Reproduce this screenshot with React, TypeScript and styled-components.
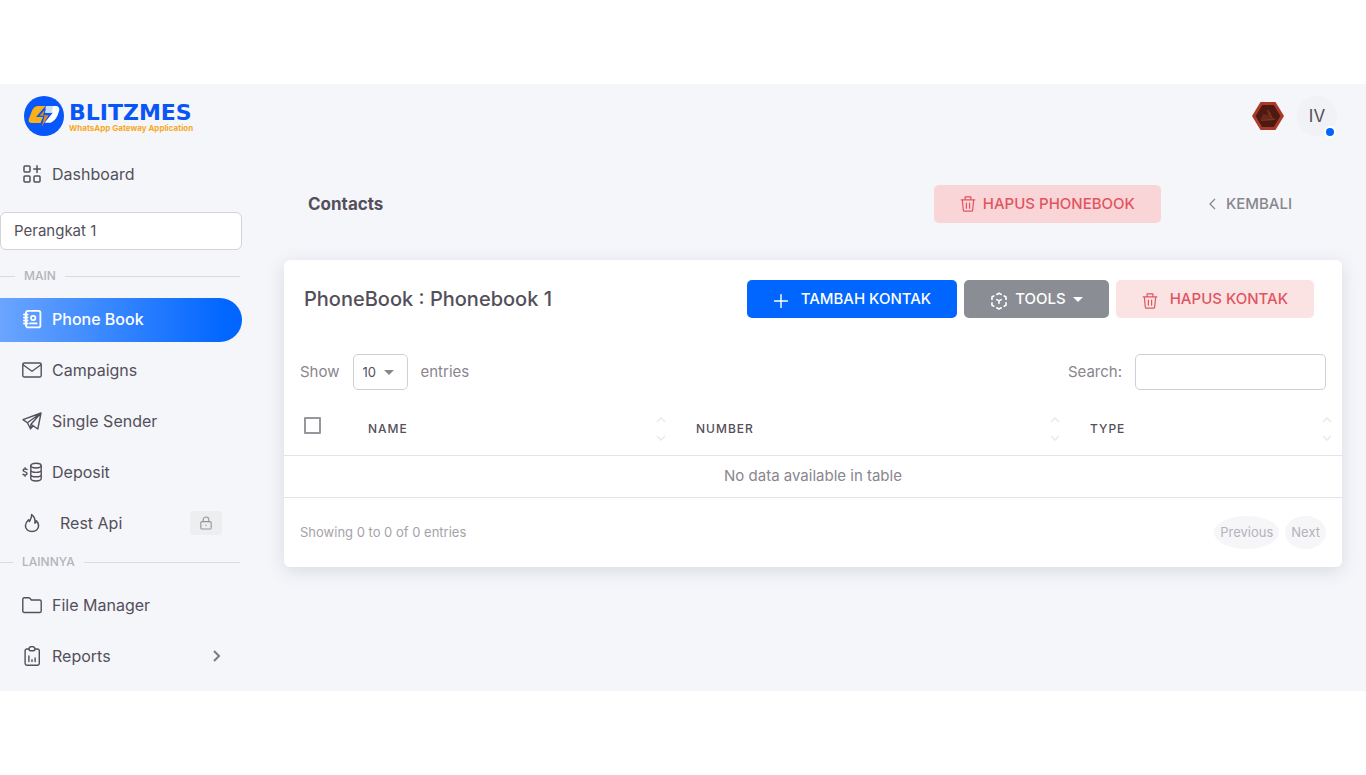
import React from "react";
import styled, { createGlobalStyle, css } from "styled-components";

const color = {
  page: "#f4f6fa",
  text: "#544f5a",
  muted: "#89868d",
  faint: "#b4b2b9",
  line: "#e4e4e8",
  blue: "#0066ff",
  red: "#e05560",
};

const GlobalStyle = createGlobalStyle`
  *, *::before, *::after { box-sizing: border-box; }
  body {
    margin: 0;
    background: #fff;
    color: ${color.text};
    font-family: Inter, "Liberation Sans", sans-serif;
    font-size: 15px;
    line-height: 22px;
  }
  button, input, select { font: inherit; color: inherit; }
`;

const Shell = styled.div`
  display: flex;
  margin: 84px 0;
  background: ${color.page};
`;

const Sidebar = styled.aside`
  flex: 0 0 260px;
  padding: 0 18px 12px 0;
`;

const Brand = styled.a`
  display: flex;
  align-items: center;
  gap: 5px;
  height: 64px;
  padding-left: 24px;
  text-decoration: none;
`;

const BrandText = styled.span`
  display: flex;
  flex-direction: column;
  padding-top: 4px;
  white-space: nowrap;
`;

const BrandName = styled.span`
  color: #0a55f5;
  font: 700 22px/20px "DejaVu Sans", sans-serif;
`;

const Tagline = styled.span`
  color: #f9a825;
  font-size: 8px;
  font-weight: 700;
  line-height: 10px;
`;

const NavList = styled.ul`
  display: flex;
  flex-direction: column;
  gap: 7px;
  margin: 0;
  padding: 0;
  list-style: none;
`;

const NavLink = styled.a<{ $active?: boolean; $wide?: boolean }>`
  display: flex;
  align-items: center;
  gap: ${(p) => (p.$wide ? 18 : 10)}px;
  height: 44px;
  padding: 0 20px 2px 22px;
  border-radius: 0 22px 22px 0;
  color: ${color.text};
  font-size: 16px;
  line-height: 24px;
  text-decoration: none;
  svg { flex: none; }
  ${(p) =>
    p.$active &&
    css`
      background: linear-gradient(90deg, #6aa5ff 0%, #1c76ff 70%, ${color.blue} 94%);
      color: #fff;
      font-weight: 500;
    `}
`;

const NavEnd = styled.span`
  display: flex;
  margin-left: auto;
  color: #7d7a82;
`;

const LockBadge = styled(NavEnd)`
  align-items: center;
  justify-content: center;
  width: 32px;
  height: 24px;
  border-radius: 4px;
  background: #edeef0;
  color: #97959b;
`;

const DeviceSelect = styled.select`
  display: block;
  width: 100%;
  height: 38px;
  margin: 15px 0;
  padding: 0 13px;
  border: 1px solid #d4d3d7;
  border-radius: 6px;
  background: #fff;
  appearance: none;
`;

const SectionTitle = styled.h2<{ $lead: number }>`
  display: flex;
  align-items: center;
  gap: 9px;
  height: 22px;
  margin: 0 2px 11px 0;
  color: ${color.faint};
  font-size: 12px;
  font-weight: 500;
  &::before, &::after { content: ""; height: 1px; background: #dadbe0; }
  &::before { width: ${(p) => p.$lead}px; }
  &::after { flex: 1; }
`;

const OtherTitle = styled(SectionTitle)`
  margin-top: 5px;
`;

const TopNav = styled.div`
  padding-top: 5px;
`;

const Main = styled.main`
  flex: 1;
  min-width: 0;
  padding: 0 24px;
`;

const TopBar = styled.header`
  display: flex;
  align-items: center;
  justify-content: flex-end;
  gap: 13px;
  height: 64px;
  padding-right: 5px;
`;

const Avatar = styled.button`
  position: relative;
  width: 40px;
  height: 40px;
  padding: 0;
  border: 0;
  border-radius: 50%;
  background: #f1f2f5;
  font-size: 17px;
  &::after {
    content: "";
    position: absolute;
    right: 1px;
    bottom: -2px;
    width: 12px;
    height: 12px;
    border: 2px solid #fff;
    border-radius: 50%;
    background: ${color.blue};
  }
`;

const PageHead = styled.div`
  display: flex;
  align-items: center;
  gap: 20px;
  padding: 37px 24px;
`;

const PageTitle = styled.h1`
  margin: 0 auto 0 0;
  font-size: 17px;
  font-weight: 700;
`;

const tones = {
  primary: css`background: ${color.blue}; color: #fff;`,
  secondary: css`background: #8a8d93; color: #fff;`,
  danger: css`background: #fad5d8; color: ${color.red};`,
  dangerSoft: css`background: #fbe3e4; color: ${color.red};`,
  plain: css`background: transparent; color: ${color.muted};`,
};

const Button = styled.button<{ $tone: keyof typeof tones; $gap?: number }>`
  display: inline-flex;
  align-items: center;
  gap: ${(p) => p.$gap ?? 12}px;
  height: 38px;
  padding: 0 26px;
  border: 0;
  border-radius: 5px;
  font-weight: 500;
  text-transform: uppercase;
  white-space: nowrap;
  ${(p) => tones[p.$tone]}
`;

const Card = styled.section`
  border-radius: 6px;
  background: #fff;
  box-shadow: 0 4px 18px rgba(76, 78, 100, 0.16);
`;

const CardHead = styled.div`
  display: flex;
  align-items: center;
  gap: 7px;
  padding: 20px 28px 20px 20px;
  ${Button} svg:first-child { margin-top: 3px; }
`;

const CardTitle = styled.h2`
  margin: 0 auto 0 0;
  font-size: 20px;
  font-weight: 500;
`;

const Controls = styled.div`
  display: flex;
  align-items: center;
  justify-content: space-between;
  padding: 16px 16px 14px;
  color: ${color.muted};
`;

const Field = styled.label`
  display: flex;
  align-items: center;
  gap: 13px;
`;

const SelectWrap = styled.span`
  position: relative;
  display: flex;
  svg { position: absolute; right: 14px; top: 16px; pointer-events: none; }
`;

const LengthSelect = styled.select`
  width: 55px;
  height: 36px;
  padding: 0 9px;
  border: 1px solid #d0cfd3;
  border-radius: 5px;
  background: #fff;
  color: ${color.text};
  font-size: 13px;
  appearance: none;
`;

const SearchInput = styled.input`
  width: 191px;
  height: 36px;
  padding: 0 12px;
  border: 1px solid #d0cfd3;
  border-radius: 5px;
  background: #fff;
`;

const Table = styled.table`
  width: 100%;
  border-collapse: collapse;
  table-layout: fixed;
`;

const Th = styled.th<{ $width?: string }>`
  width: ${(p) => p.$width ?? "auto"};
  height: 51px;
  padding: 0 10px 0 20px;
  border-bottom: 1px solid ${color.line};
  font-size: 12px;
  font-weight: 500;
  letter-spacing: 1px;
  text-align: left;
`;

const SortHead = styled.span`
  display: flex;
  align-items: center;
  justify-content: space-between;
`;

const Check = styled.input`
  display: block;
  width: 17px;
  height: 17px;
  margin: 0 0 8px;
  border: 2px solid #98959c;
  border-radius: 1px;
  background: #fff;
  appearance: none;
  &:checked { background: ${color.blue}; }
`;

const Empty = styled.td`
  height: 42px;
  padding: 0;
  border-bottom: 1px solid ${color.line};
  color: ${color.muted};
  text-align: center;
`;

const CardFoot = styled.div`
  display: flex;
  align-items: center;
  gap: 6px;
  padding: 18px 16px;
  color: #a5a3a9;
  font-size: 13px;
`;

const Info = styled.span`
  margin-right: auto;
`;

const PageButton = styled.button`
  height: 33px;
  padding: 0 6px;
  border: 0;
  border-radius: 50%;
  background: #f6f6f9;
  color: ${color.faint};
`;

const Stroke = ({ size = 20, width = 1.5, children }: { size?: number; width?: number; children: React.ReactNode }) => (
  <svg width={size} height={size} viewBox="0 0 20 20" fill="none" stroke="currentColor" strokeWidth={width} strokeLinecap="round" strokeLinejoin="round" aria-hidden="true">
    {children}
  </svg>
);

const DashboardIcon = () => (
  <Stroke>
    <rect x="2" y="2" width="6" height="6" rx="1" />
    <rect x="2" y="12" width="6" height="6" rx="1" />
    <rect x="12" y="12" width="6" height="6" rx="1" />
    <path d="M15 1.8v6.6M11.7 5.1h6.6" />
  </Stroke>
);
const BookIcon = () => (
  <Stroke width={1.8}>
    <rect x="4" y="1.8" width="14.4" height="16.6" rx="2" />
    <path d="M2 5.5h3.6M2 8.5h3.6M2 11.5h3.6M2 14.5h3.6M8 14.4h6.6" />
    <circle cx="11.2" cy="9" r="2.2" />
  </Stroke>
);
const MailIcon = () => (
  <Stroke width={1.4}>
    <rect x=".8" y="3" width="18.4" height="14" rx="1.6" />
    <path d="m1 4.8 9 6.4 9-6.4" />
  </Stroke>
);
const SendIcon = () => (
  <Stroke width={1.4}>
    <path d="M19 2 1 8.6l4.400 3.200L19 2l-3.200 16-4.600-3.200-2.700 3-3.100-6M19 2 9 13.200l2.200 1.600M9 13.200l-.5 4.600" />
  </Stroke>
);
const DepositIcon = () => (
  <Stroke width={1.4}>
    <ellipse cx="14" cy="3.6" rx="5.2" ry="2.4" />
    <path d="M8.8 3.6v13c0 1.4 2.3 2.4 5.2 2.4s5.2-1 5.2-2.4v-13M8.8 8c0 1.4 2.3 2.4 5.2 2.4s5.2-1 5.2-2.4M8.8 12.4c0 1.4 2.3 2.4 5.2 2.4s5.2-1 5.2-2.4" />
    <path d="M5 7.5C4.4 6.9 1.1 6.5 1.1 8.3c0 1.9 4 1.2 4 3.2 0 1.8-3.4 1.7-4.1.8M3.1 5.8v1M3.1 13.3v1" />
  </Stroke>
);
const FireIcon = () => (
  <Stroke width={1.5}>
    <path d="M9.6 1.6c.4 3.400-1.400 4.800-2.200 6.800-.5-.5-.7-1-.8-1.600-2 1.800-3.200 3.800-3.200 6 0 3.400 3 5.800 6.600 5.800s6.600-2.400 6.600-5.800c0-2-1-3.800-2.200-5-.2 1.200-.7 1.900-1.500 2.300.4-3.400-.7-6.800-3.300-8.500Z" />
  </Stroke>
);
const LockIcon = () => (
  <Stroke size={14} width={1.6}>
    <rect x="2.6" y="8" width="14.8" height="10.6" rx="1.6" />
    <path d="M6 8V5.4a4 4 0 0 1 8 0V8M10 13v.6" />
  </Stroke>
);
const FolderIcon = () => (
  <Stroke width={1.4}>
    <path d="M.8 15.9V4.300c0-1 .7-1.600 1.600-1.600h4.200c.6 0 1 .2 1.300.6l1.400 1.700h8.300c1 0 1.600.7 1.600 1.600v9.300c0 1-.7 1.600-1.600 1.600H2.400c-.9 0-1.600-.6-1.600-1.600Z" />
  </Stroke>
);
const ReportIcon = () => (
  <Stroke width={1.4}>
    <path d="M7 3H4.900c-1 0-1.800.7-1.800 1.700v12.900c0 1 .8 1.700 1.800 1.700h10.600c1 0 1.800-.7 1.800-1.700V4.700c0-1-.8-1.700-1.800-1.700H13" />
    <path d="M7 3c0-2 1.200-2.400 3-2.400S13 1 13 3c0 1.200-.6 1.800-1.600 1.800H8.600C7.600 4.800 7 4.200 7 3ZM6.900 10v5.500M10 13.700v1.800M13.100 12v3.500" />
  </Stroke>
);
const TrashIcon = () => (
  <Stroke size={16} width={1.5}>
    <path d="M1.500 4.800h17M6.400 4.500V1.200h7.200v3.300M2.900 5l1.300 13c.1.700.5 1 1.100 1h9.400c.6 0 1-.3 1.100-1l1.300-13M8 9v6.200M12 9v6.200" />
  </Stroke>
);
const PlusIcon = () => (
  <Stroke size={16} width={1.8}>
    <path d="M10 2v16M2 10h16" />
  </Stroke>
);
const CubeIcon = () => (
  <Stroke size={18} width={1.8}>
    <path d="M7.500 2.700 10 1.400l2.500 1.300M15.800 4.400l2 1.200v2.600M17.800 12v2.600l-2 1.200M12.500 17.500 10 18.800l-2.500-1.300M4.200 15.800l-2-1.200V12M2.200 8.200V5.600l2-1.200M7.600 8.500l2.400 1.400 2.400-1.400M10 9.900v2.700" />
  </Stroke>
);
const ChevronIcon = ({ left = false }: { left?: boolean }) => (
  <svg width="10" height="14" viewBox="0 0 10 14" fill="none" stroke="currentColor" strokeWidth={left ? 1.3 : 2} aria-hidden="true">
    <path d={left ? "M8 2 3 7l5 5" : "m2 2 5 5-5 5"} />
  </svg>
);
const CaretIcon = () => (
  <svg width="10" height="5" viewBox="0 0 10 5" fill="currentColor" aria-hidden="true">
    <path d="M0 0h10L5 5Z" />
  </svg>
);
const SortIcon = () => (
  <svg width="10" height="24" viewBox="0 0 10 24" fill="none" stroke="#e8e7ea" strokeWidth="1.300" aria-hidden="true">
    <path d="m1 5 4-4 4 4M1 19l4 4 4-4" />
  </svg>
);
const LogoMark = () => (
  <svg width="40" height="40" viewBox="0 0 40 40" aria-hidden="true">
    <circle cx="20" cy="20" r="20" fill="#0757fb" />
    <path d="M14.500 10h7L12 21h7l-2.500 6H8.500c-3.200 0-4.600-1.800-3.500-4.600l2.900-7.400C9.200 11.800 11.200 10 14.500 10Z" fill="#fbb018" />
    <path d="M22 10h9c3.600 0 5 2 4 5.300l-1.200 3.500c-1.300 3.600-3.600 6.200-7.200 7.900H20.500l8.300-10h-7.600Z" fill="#fff" />
    <path d="M22 10h7l-1 6.700h-6.800Z" fill="#cfdcf5" />
    <path d="m22 12.500-8 8.100h5.600L17.200 31l9.600-13h-6.500Z" fill="#0757fb" />
    <path d="m20.600 14.200-5.200 5.600h5.200L17.600 31l7-11.800h-5.400Z" fill="#e68a10" />
  </svg>
);
const HexBadge = () => (
  <svg width="32" height="28" viewBox="0 0 32 28" role="img" aria-label="Workspace">
    <path d="M8.500 0h15L32 14l-8.500 14h-15L0 14Z" fill="#a93a29" />
    <path d="M10.200 3h11.600l6.600 11-6.600 11H10.200L3.600 14Z" fill="#4c1a10" />
    <path d="M8 17.500c5 1.500 11 1.500 16-.5-3-.7-4-2-5-5-1-2-3-4-5-5 1.500 2 1.700 4 1.500 6.500-1.500-1-3-1.500-5-1.500.5 1 .3 2.200-2.500 5.500Z" fill="#6b271a" />
    <path d="m9 18.500 14-1.200M16 8l4 8" stroke="#8f3f29" strokeWidth=".7" />
  </svg>
);

type Item = { label: string; icon: React.ReactNode; active?: boolean; wide?: boolean; end?: React.ReactNode };

const topItems: Item[] = [{ label: "Dashboard", icon: <DashboardIcon /> }];
const mainItems: Item[] = [
  { label: "Phone Book", icon: <BookIcon />, active: true },
  { label: "Campaigns", icon: <MailIcon /> },
  { label: "Single Sender", icon: <SendIcon /> },
  { label: "Deposit", icon: <DepositIcon /> },
  { label: "Rest Api", icon: <FireIcon />, wide: true, end: <LockBadge><LockIcon /></LockBadge> },
];
const otherItems: Item[] = [
  { label: "File Manager", icon: <FolderIcon /> },
  { label: "Reports", icon: <ReportIcon />, end: <NavEnd><ChevronIcon /></NavEnd> },
];

const Nav = ({ items }: { items: Item[] }) => (
  <NavList>
    {items.map((item) => (
      <li key={item.label}>
        <NavLink href="#" $active={item.active} $wide={item.wide}>
          {item.icon}
          {item.label}
          {item.end}
        </NavLink>
      </li>
    ))}
  </NavList>
);

export default function App() {
  return (
    <>
      <GlobalStyle />
      <Shell>
        <Sidebar>
          <Brand href="#">
            <LogoMark />
            <BrandText>
              <BrandName>BLITZMES</BrandName>
              <Tagline>WhatsApp Gateway Application</Tagline>
            </BrandText>
          </Brand>
          <nav>
            <TopNav>
              <Nav items={topItems} />
            </TopNav>
            <DeviceSelect aria-label="Perangkat">
              <option>Perangkat 1</option>
            </DeviceSelect>
            <SectionTitle $lead={15}>MAIN</SectionTitle>
            <Nav items={mainItems} />
            <OtherTitle $lead={13}>LAINNYA</OtherTitle>
            <Nav items={otherItems} />
          </nav>
        </Sidebar>
        <Main>
          <TopBar>
            <HexBadge />
            <Avatar type="button">IV</Avatar>
          </TopBar>
          <PageHead>
            <PageTitle>Contacts</PageTitle>
            <Button type="button" $tone="danger" $gap={7}>
              <TrashIcon />
              Hapus Phonebook
            </Button>
            <Button type="button" $tone="plain" $gap={9}>
              <ChevronIcon left />
              Kembali
            </Button>
          </PageHead>
          <Card>
            <CardHead>
              <CardTitle>PhoneBook : Phonebook 1</CardTitle>
              <Button type="button" $tone="primary">
                <PlusIcon />
                Tambah Kontak
              </Button>
              <Button type="button" $tone="secondary" $gap={7}>
                <CubeIcon />
                Tools
                <CaretIcon />
              </Button>
              <Button type="button" $tone="dangerSoft">
                <TrashIcon />
                Hapus Kontak
              </Button>
            </CardHead>
            <Controls>
              <Field>
                Show
                <SelectWrap>
                  <LengthSelect>
                    <option>10</option>
                    <option>25</option>
                    <option>50</option>
                  </LengthSelect>
                  <CaretIcon />
                </SelectWrap>
                entries
              </Field>
              <Field>
                Search:
                <SearchInput type="search" />
              </Field>
            </Controls>
            <Table>
              <thead>
                <tr>
                  <Th $width="64px">
                    <Check type="checkbox" aria-label="Select all" />
                  </Th>
                  <Th $width="31%"><SortHead>NAME<SortIcon /></SortHead></Th>
                  <Th><SortHead>NUMBER<SortIcon /></SortHead></Th>
                  <Th $width="272px"><SortHead>TYPE<SortIcon /></SortHead></Th>
                </tr>
              </thead>
              <tbody>
                <tr>
                  <Empty colSpan={4}>No data available in table</Empty>
                </tr>
              </tbody>
            </Table>
            <CardFoot>
              <Info>Showing 0 to 0 of 0 entries</Info>
              <PageButton type="button" disabled>Previous</PageButton>
              <PageButton type="button" disabled>Next</PageButton>
            </CardFoot>
          </Card>
        </Main>
      </Shell>
    </>
  );
}
